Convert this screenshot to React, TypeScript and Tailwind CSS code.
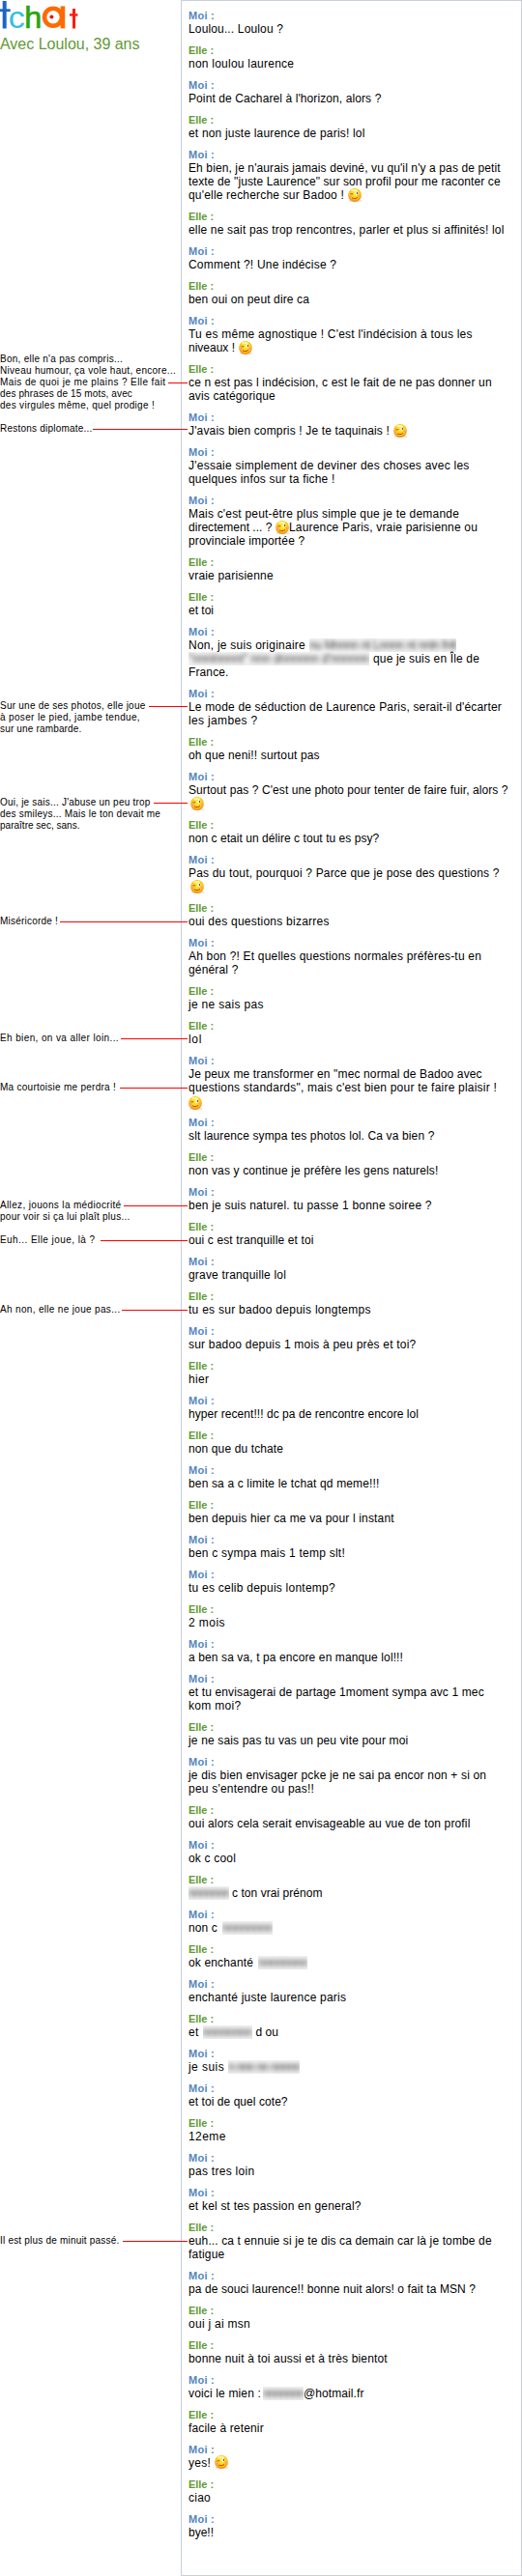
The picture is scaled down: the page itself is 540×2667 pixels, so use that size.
// App.tsx
import type { ReactNode } from 'react';

const FONT = '"Liberation Sans", Arial, sans-serif';

// text or smiley, width in px, optional gap before
type Part =
  | { t: string; w: number; gap?: number }
  | { blur: string; w: number; gap?: number }
  | { smiley: true; gap: number; dy?: number };

type Line = Part[];

interface Message {
  who: 'Moi' | 'Elle';
  lines: Line[];
}

interface Note {
  top: string;
  lines: [string, number][];
  link: number;
  from: number;
}

const l = (t: string, w: number): Line => [{ t, w }];
const moi = (...lines: Line[]): Message => ({ who: 'Moi', lines });
const elle = (...lines: Line[]): Message => ({ who: 'Elle', lines });

const messages: Message[] = [
  moi(l('Loulou... Loulou ?', 98)),
  elle(l('non loulou laurence', 109.2)),
  moi(l("Point de Cacharel à l'horizon, alors ?", 199.4)),
  elle(l('et non juste laurence de paris! lol', 182.5)),
  moi(
    l("Eh bien, je n'aurais jamais deviné, vu qu'il n'y a pas de petit", 322.7),
    l('texte de "juste Laurence" sur son profil pour me raconter ce', 322.7),
    [{ t: "qu'elle recherche sur Badoo !", w: 161 }, { smiley: true, gap: 4 }],
  ),
  elle(l('elle ne sait pas trop rencontres, parler et plus si affinités! lol', 326.5)),
  moi(l('Comment ?! Une indécise ?', 153.2)),
  elle(l('ben oui on peut dire ca', 125)),
  moi(
    l("Tu es même agnostique ! C'est l'indécision à tous les", 293.7),
    [{ t: 'niveaux !', w: 48 }, { smiley: true, gap: 4 }],
  ),
  elle(
    l('ce n est pas l indécision, c est le fait de ne pas donner un', 313.7),
    l('avis catégorique', 89.9),
  ),
  moi([{ t: "J'avais bien compris ! Je te taquinais !", w: 208 }, { smiley: true, gap: 4 }]),
  moi(
    l("J'essaie simplement de deviner des choses avec les", 290.6),
    l('quelques infos sur ta fiche !', 151.5),
  ),
  moi(
    l("Mais c'est peut-être plus simple que je te demande", 280),
    [
      { t: 'directement ... ?', w: 86.5 },
      { smiley: true, gap: 3 },
      { t: 'Laurence Paris, vraie parisienne ou', w: 195, gap: 0.5 },
    ],
    l('provinciale importée ?', 120.2),
  ),
  elle(l('vraie parisienne', 87.8)),
  elle(l('et toi', 26)),
  moi(
    [{ t: 'Non, je suis originaire', w: 121 }, { blur: 'nu Mnnnn nt Lnnnn nt nnln fnlt', w: 152, gap: 4 }],
    [
      { blur: '"nnnlnnnnt" nnn dnnnnnn d\'nnnnnn', w: 187 },
      { t: 'que je suis en Île de', w: 110, gap: 4 },
    ],
    l('France.', 41.5),
  ),
  moi(
    l("Le mode de séduction de Laurence Paris, serait-il d'écarter", 324),
    l('les jambes ?', 71.5),
  ),
  elle(l('oh que neni!! surtout pas', 135.7)),
  moi(
    l("Surtout pas ? C'est une photo pour tenter de faire fuir, alors ?", 330.6),
    [{ smiley: true, gap: 2 }],
  ),
  elle(l('non c etait un délire c tout tu es psy?', 197.3)),
  moi(
    l('Pas du tout, pourquoi ? Parce que je pose des questions ?', 321.6),
    [{ smiley: true, gap: 2 }],
  ),
  elle(l('oui des questions bizarres', 145.7)),
  moi(
    l('Ah bon ?! Et quelles questions normales préfères-tu en', 303),
    l('général ?', 51.5),
  ),
  elle(l('je ne sais pas', 77.8)),
  elle(l('lol', 14)),
  moi(
    l('Je peux me transformer en "mec normal de Badoo avec', 303.7),
    l('questions standards", mais c\'est bien pour te faire plaisir !', 319),
    [{ smiley: true, gap: 0, dy: 2 }],
  ),
  moi(l('slt laurence sympa tes photos lol. Ca va bien ?', 254.5)),
  elle(l('non vas y continue je préfère les gens naturels!', 258.5)),
  moi(l('ben je suis naturel. tu passe 1 bonne soiree ?', 251.7)),
  elle(l('oui c est tranquille et toi', 129.5)),
  moi(l('grave tranquille lol', 101)),
  elle(l('tu es sur badoo depuis longtemps', 188.7)),
  moi(l('sur badoo depuis 1 mois à peu près et toi?', 235.5)),
  elle(l('hier', 21.3)),
  moi(l('hyper recent!!! dc pa de rencontre encore lol', 238)),
  elle(l('non que du tchate', 98.1)),
  moi(l('ben sa a c limite le tchat qd meme!!!', 197.5)),
  elle(l('ben depuis hier ca me va pour l instant', 212.8)),
  moi(l('ben c sympa mais 1 temp slt!', 162)),
  moi(l('tu es celib depuis lontemp?', 151.9)),
  elle(l('2 mois', 37.9)),
  moi(l('a ben sa va, t pa encore en manque lol!!!', 222)),
  moi(
    l('et tu envisagerai de partage 1moment sympa avc 1 mec', 305.8),
    l('kom moi?', 54.4),
  ),
  elle(l('je ne sais pas tu vas un peu vite pour moi', 227.4)),
  moi(
    l('je dis bien envisager pcke je ne sai pa encor non + si on', 308.2),
    l("peu s'entendre ou pas!!", 130),
  ),
  elle(l('oui alors cela serait envisageable au vue de ton profil', 291.5)),
  moi(l('ok c cool', 49)),
  elle([{ blur: 'nnnnnnn', w: 42 }, { t: 'c ton vrai prénom', w: 93.5, gap: 3 }]),
  moi([{ t: 'non c', w: 30 }, { blur: 'nnnnnnnn', w: 52, gap: 5 }]),
  elle([{ t: 'ok enchanté', w: 67 }, { blur: 'nnnnnnnn', w: 51, gap: 5 }]),
  moi(l('enchanté juste laurence paris', 163.2)),
  elle([
    { t: 'et', w: 10.5 },
    { blur: 'nnnnnnnn', w: 51, gap: 4 },
    { t: 'd ou', w: 23.5, gap: 4 },
  ]),
  moi([{ t: 'je suis', w: 37.2 }, { blur: 'n nnn nn nnnnn', w: 74, gap: 4 }]),
  moi(l('et toi de quel cote?', 102.6)),
  elle(l('12eme', 38.8)),
  moi(l('pas tres loin', 68.4)),
  moi(l('et kel st tes passion en general?', 178.7)),
  elle(
    l('euh... ca t ennuie si je te dis ca demain car là je tombe de', 313.7),
    l('fatigue', 37.4),
  ),
  moi(l('pa de souci laurence!! bonne nuit alors! o fait ta MSN ?', 297)),
  elle(l('oui j ai msn', 64)),
  elle(l('bonne nuit à toi aussi et à très bientot', 205.8)),
  moi([
    { t: 'voici le mien :', w: 75 },
    { blur: 'nnnnnnn', w: 42, gap: 2 },
    { t: '@hotmail.fr', w: 62.5 },
  ]),
  elle(l('facile à retenir', 77.8)),
  moi([{ t: 'yes!', w: 23 }, { smiley: true, gap: 3.5, dy: -1 }]),
  elle(l('ciao', 23)),
  moi(l('bye!!', 26)),
];

const notes: Note[] = [
  {
    top: 'mt-[306px]',
    lines: [
      ["Bon, elle n'a pas compris...", 127],
      ['Niveau humour, ça vole haut, encore...', 182],
      ['Mais de quoi je me plains ? Elle fait', 171.5],
      ['des phrases de 15 mots, avec', 137],
      ['des virgules même, quel prodige !', 160],
    ],
    link: 2,
    from: 174,
  },
  { top: 'mt-3', lines: [['Restons diplomate...', 95.5]], link: 0, from: 95 },
  {
    top: 'mt-[275px]',
    lines: [
      ['Sur une de ses photos, elle joue', 150.5],
      ['à poser le pied, jambe tendue,', 145],
      ['sur une rambarde.', 84.5],
    ],
    link: 0,
    from: 154,
  },
  {
    top: 'mt-16',
    lines: [
      ["Oui, je sais... J'abuse un peu trop", 155.5],
      ['des smileys... Mais le ton devait me', 166],
      ['paraître sec, sans.', 82.5],
    ],
    link: 0,
    from: 159,
  },
  { top: 'mt-[87px]', lines: [['Miséricorde !', 60]], link: 0, from: 62 },
  { top: 'mt-[109px]', lines: [['Eh bien, on va aller loin...', 123]], link: 0, from: 125 },
  { top: 'mt-[39px]', lines: [['Ma courtoisie me perdra !', 120]], link: 0, from: 124 },
  {
    top: 'mt-[110px]',
    lines: [
      ['Allez, jouons la médiocrité', 125.5],
      ['pour voir si ça lui plaît plus...', 134.5],
    ],
    link: 0,
    from: 128,
  },
  { top: 'mt-3', lines: [['Euh... Elle joue, là ?', 98.5]], link: 0, from: 104 },
  { top: 'mt-[60px]', lines: [['Ah non, elle ne joue pas...', 124.5]], link: 0, from: 126 },
  { top: 'mt-[952px]', lines: [['Il est plus de minuit passé.', 123.5]], link: 0, from: 127 },
];

const ctx = document.createElement('canvas').getContext('2d')!;

// Spread the letters so that the run is exactly `width` wide
function tracking(text: string, width: number, font: string) {
  ctx.font = `${font} ${FONT}`;
  return (width - ctx.measureText(text).width) / text.length;
}

function Fit({ text, width, font }: { text: string; width: number; font: string }): ReactNode {
  return (
    <span
      className="inline-block whitespace-pre"
      style={{ width, letterSpacing: tracking(text, width, font) }}
    >
      {text}
    </span>
  );
}

function Smiley({ dy = 0 }: { dy?: number }) {
  return (
    <svg
      width="14"
      height="14"
      viewBox="0 0 14 14"
      className="shrink-0"
      style={{ transform: `translateY(${dy}px)` }}
    >
      <defs>
        <radialGradient id="face" cx="50%" cy="40%" r="62%">
          <stop offset="0" stopColor="#ffec3c" />
          <stop offset="0.6" stopColor="#ffce1a" />
          <stop offset="1" stopColor="#f07c08" />
        </radialGradient>
      </defs>
      <rect x="1" y="12" width="13" height="2" fill="#e6e6e6" />
      <circle cx="7" cy="7" r="6.9" fill="url(#face)" />
      <ellipse cx="6.5" cy="2.2" rx="3.4" ry="1.1" fill="#fff6a0" />
      <circle cx="2.4" cy="8.4" r="1.3" fill="#ff9d7c" />
      <circle cx="11.6" cy="7.8" r="1.3" fill="#ff9d7c" />
      <path d="M2.4 5.8h3" stroke="#a85a08" strokeWidth="1" />
      <ellipse cx="8.8" cy="5" rx="1.4" ry="1.8" fill="#fff" />
      <rect x="8.8" y="4.2" width="1.2" height="1.6" fill="#2c3f55" />
      <path d="M4 9.8c1.6 1.1 4.2 1.1 6-.4" stroke="#b8440c" strokeWidth="1" fill="none" />
    </svg>
  );
}

function Logo() {
  return (
    <svg width="84" height="36" viewBox="0 0 84 36" className="block" aria-label="tchat">
      <rect x="2.7" y="1" width="4" height="28.5" fill="#1c66c4" />
      <rect x="0" y="9.3" width="10.7" height="2.8" fill="#1c66c4" />
      <text x="8.8" y="29.2" fontFamily="Liberation Sans" fontSize="31" fill="#33c0de" textLength="17" lengthAdjust="spacingAndGlyphs">c</text>
      <text x="25.3" y="29.4" fontFamily="Liberation Sans" fontSize="32" fill="#2ca50a" stroke="#2ca50a" strokeWidth="0.7" textLength="18" lengthAdjust="spacingAndGlyphs">h</text>
      <circle cx="55" cy="17.8" r="9" fill="none" stroke="#ff6a00" strokeWidth="4.6" />
      <rect x="62.6" y="6.4" width="4.6" height="23" fill="#ff6a00" />
      <circle cx="53.4" cy="17.4" r="2" fill="#e8140c" />
      <rect x="75" y="9" width="3" height="20.5" fill="#ff1a10" />
      <rect x="72" y="14.2" width="8.4" height="2.4" fill="#ff1a10" />
    </svg>
  );
}

function renderPart(part: Part, i: number) {
  if ('smiley' in part) {
    return (
      <span key={i} className="flex" style={{ marginLeft: part.gap }}>
        <Smiley dy={part.dy} />
      </span>
    );
  }
  if ('blur' in part) {
    return (
      <span key={i} className="flex overflow-hidden bg-[#f1f1f1]" style={{ marginLeft: part.gap ?? 0 }}>
        <span className="flex text-[#444] blur-[2px]">
          <Fit text={part.blur} width={part.w} font="12px" />
        </span>
      </span>
    );
  }
  return (
    <span key={i} className="flex" style={{ marginLeft: part.gap ?? 0 }}>
      <Fit text={part.t} width={part.w} font="12px" />
    </span>
  );
}

export default function App() {
  return (
    <main className="flex w-[540px] h-[2667px] bg-white overflow-hidden font-['Liberation_Sans',Arial,sans-serif] text-black">

      {/* NOTES */}
      <aside className="relative z-10 w-[187px] shrink-0">
        <div className="h-[60px]">
          <Logo />
          <h1 className="text-[16px] leading-[20px] text-[#639a37]">
            <Fit text="Avec Loulou, 39 ans" width={144.5} font="16px" />
          </h1>
        </div>
        {notes.map((note) => (
          <div key={note.lines[0][0]} className={note.top}>
            {note.lines.map(([text, width], i) => (
              <div key={text} className="flex w-[194px] h-3 text-[10px] leading-3">
                <Fit text={text} width={width} font="10px" />
                {i === note.link && (
                  <span className="ml-auto mt-1.5 h-px bg-[#ff0000]" style={{ width: 194 - note.from }} />
                )}
              </div>
            ))}
          </div>
        ))}
      </aside>

      {/* CONVERSATION */}
      <section className="w-[353px] shrink-0 border border-[#c8cfdd] pl-[7px] pt-2">
        {messages.map((msg, i) => (
          <div key={i} className="mb-2">
            <div
              className={`h-[14px] text-[11px] leading-[14px] font-bold ${
                msg.who === 'Moi' ? 'text-[#5585c1]' : 'text-[#629a34]'
              }`}
            >
              <Fit
                text={`${msg.who} :`}
                width={msg.who === 'Moi' ? 27 : 26}
                font="bold 11px"
              />
            </div>
            {msg.lines.map((line, j) => (
              <div key={j} className="flex h-[14px] text-[12px] leading-[14px]">
                {line.map(renderPart)}
              </div>
            ))}
          </div>
        ))}
      </section>
    </main>
  );
}
